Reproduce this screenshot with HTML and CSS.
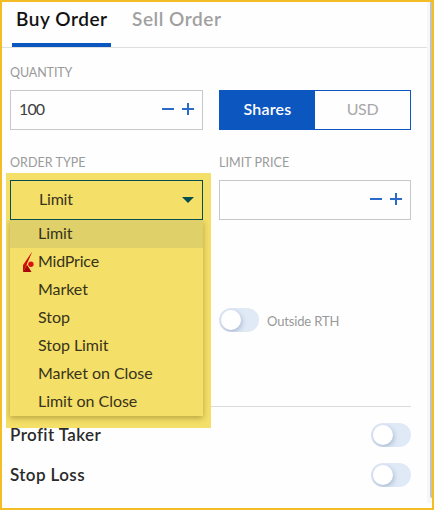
FILE: index.html
```html
<!DOCTYPE html>
<html lang="en">
<head>
<meta charset="utf-8">
<title>Buy Order</title>
<link rel="stylesheet" href="styles.css">
</head>
<body>
<div class="panel">
  <main class="content">
    <nav class="tabs"><div class="tab active"><span>Buy Order</span></div><div class="tab"><span>Sell Order</span></div></nav>
    <div class="form">
      <div class="grid">
        <section class="group">
          <div class="label quantity"><span>QUANTITY</span></div>
          <div class="field"><span class="value">100</span>
            <svg class="stepper" width="32" height="12" viewBox="0 0 32 12"><path d="M0 6H12M20 6H32M26 0V12"/></svg>
          </div>
        </section>
        <section class="group">
          <div class="label"></div>
          <div class="segmented"><div class="segment selected"><span>Shares</span></div><div class="segment"><span>USD</span></div></div>
        </section>
        <section class="group">
          <div class="label"><span>ORDER TYPE</span></div>
          <div class="select">
            <div class="highlight"></div>
            <div class="field select-field"><span>Limit</span>
              <svg width="12" height="6" viewBox="0 0 12 6"><path d="M0 0H12L6 6Z" fill="#044e50"/></svg>
            </div>
            <div class="menu">
              <div class="option current"><span>Limit</span></div>
              <div class="option">
                <svg class="logo" width="11" height="20" viewBox="0 0 11 20"><path d="M9 0L0 13V20Z" fill="#e31414"/><path d="M9 0L4 11.5L0 20V15Z" fill="#c90d0d"/><path d="M0 20L4 12.5L8.5 20Z" fill="#a90707"/><circle cx="7.9" cy="12.3" r="3.4" fill="#f4df68"/><circle cx="7.9" cy="12.3" r="2.7" fill="#dc1212"/></svg>
                <span class="midprice">MidPrice</span></div>
              <div class="option"><span>Market</span></div>
              <div class="option"><span>Stop</span></div>
              <div class="option"><span>Stop Limit</span></div>
              <div class="option"><span>Market on Close</span></div>
              <div class="option"><span>Limit on Close</span></div>
            </div>
          </div>
        </section>
        <section class="group">
          <div class="label"><span>LIMIT PRICE</span></div>
          <div class="field">
            <svg class="stepper" width="32" height="12" viewBox="0 0 32 12"><path d="M0 6H12M20 6H32M26 0V12"/></svg>
          </div>
          <div class="outside"><i class="toggle"></i><span>Outside RTH</span></div>
        </section>
      </div>
      <div class="extras">
        <div class="extra"><span>Profit Taker</span><i class="toggle"></i></div>
        <div class="extra"><span>Stop Loss</span><i class="toggle"></i></div>
      </div>
    </div>
  </main>
  <div class="scrollbar"><div class="thumb"></div></div>
</div>
</body>
</html>
```
FILE: styles.css
```css
* { box-sizing: border-box; }
body { margin: 0; font-family: Lato, "Open Sans", sans-serif; color: #404040; }
span { white-space: nowrap; }
svg { display: block; flex: none; }
.panel { display: flex; width: 434px; height: 510px; border: 2px solid #f5bd25; background: #fefefe; overflow: hidden; }
.content { width: 425px; }
.tabs { display: flex; height: 46px; padding-left: 10px; border-bottom: 1px solid #dfdfdf; }
.tab { height: 45px; padding: 5px 4px 0; margin-right: 17px; font-size: 19px; line-height: 24px; font-weight: 600; letter-spacing: .55px; color: #a0a0a0; }
.tab.active { width: 99px; height: 45px; color: #111; border-bottom: 4px solid #0b56bf; }
.form { padding: 0 16px 0 8px; }
.grid { display: grid; grid-template-columns: 193px 192px; column-gap: 16px; grid-template-rows: 90px 268px; }
.label { height: 42px; padding-top: 16px; font-size: 12.5px; line-height: 18px; letter-spacing: .05px; color: #9a9a9a; }
.label.quantity { letter-spacing: -.1px; }
.field { display: flex; align-items: center; justify-content: space-between; height: 40px; padding: 0 8px; border: 1px solid #c8c8c8; font-size: 16px; }
.value { position: relative; top: -2px; letter-spacing: -.9px; }
.stepper { margin-left: auto; position: relative; top: -1px; stroke: #2b6ac9; stroke-width: 2; fill: none; }
.segmented { display: flex; height: 40px; border: 1px solid #0b56bf; }
.segment { flex: 1; display: flex; align-items: center; justify-content: center; padding-bottom: 4px; font-size: 16px; letter-spacing: -.3px; color: #a8a8a8; }
.segment.selected { background: #0b56bf; color: #fff; font-weight: 600; letter-spacing: .2px; }
.select { position: relative; z-index: 1; color: #38331b; }
.highlight { position: absolute; left: -4px; top: -7px; width: 205px; height: 255px; background: #f4df68; }
.select-field { position: relative; padding-left: 28px; border-color: #044e50; }
.select-field span { position: relative; top: -2px; letter-spacing: -.2px; }
.menu { position: absolute; top: 40px; left: 0; width: 193px; background: #f4df68; box-shadow: 0 2px 6px rgba(80, 65, 0, .38); clip-path: inset(0 -8px -12px -4px); }
.option { display: flex; position: relative; align-items: center; height: 28px; padding: 0 0 3px 28px; font-size: 16px; letter-spacing: -.05px; }
.option.current { background: #dfd069; }
.midprice { letter-spacing: -.2px; }
.logo { position: absolute; left: 13px; top: 4px; }
.outside { display: flex; align-items: center; margin-top: 88px; font-size: 13px; letter-spacing: -.15px; color: #999; gap: 8px; }
.outside span { position: relative; top: 1px; }
.toggle { position: relative; flex: none; width: 40px; height: 24px; border-radius: 12px; background: #e0e9f6; overflow: hidden; }
.toggle::after { content: ""; position: absolute; left: 2px; top: 2px; width: 20px; height: 20px; border-radius: 50%; background: #fff; box-shadow: 1px 2px 5px rgba(50, 80, 130, .32); }
.extras { border-top: 1px solid #dcdcdc; padding-top: 8px; }
.extra { display: flex; align-items: center; justify-content: space-between; height: 40px; font-size: 17px; font-weight: 600; letter-spacing: .4px; color: #2a2a2a; }
.extra span { position: relative; top: -1px; }
.scrollbar { width: 5px; height: 501px; background: #f7f7f7; padding-left: 3px; }
.thumb { height: 496px; background: #c1c1c1; border-bottom-left-radius: 2px; }
```
